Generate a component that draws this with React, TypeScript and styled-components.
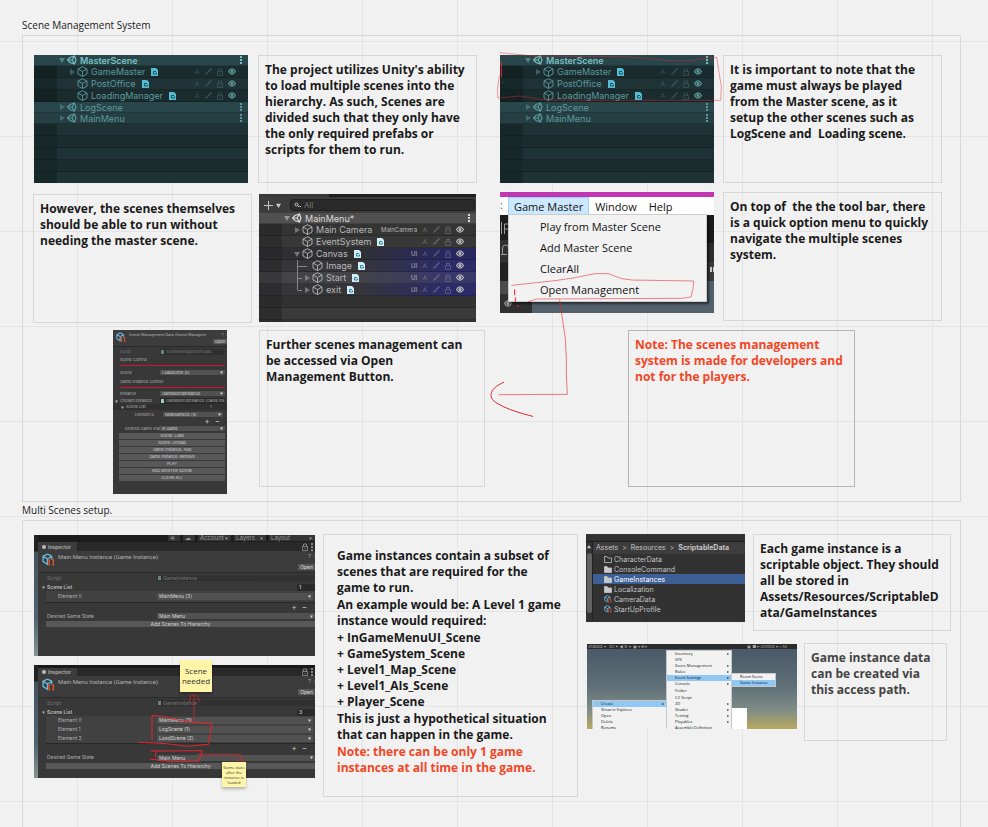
import React from "react";
import styled, { createGlobalStyle, css } from "styled-components";

const GlobalStyle = createGlobalStyle`
  * { box-sizing: border-box; }
  body { margin: 0; background: #f1f1f1; }
  button, input, select {
    margin: 0; padding: 0; border: 0; min-width: 0;
    font: inherit; color: inherit; background: none; text-align: left;
  }
  select, input { appearance: none; border-radius: 0; outline: 0; }
  h2, p, ul { margin: 0; padding: 0; list-style: none; font-weight: inherit; }
  svg { display: block; flex: none; }
`;

/* ---------- board ---------- */

const Board = styled.main`
  min-height: 100vh;
  display: flex;
  flex-direction: column;
  padding: 17px 27px 0 22px;
  overflow: hidden;
  font-family: "Open Sans", "Noto Sans", sans-serif;
  color: #1a1a1a;
  background-color: #f1f1f1;
  background-image:
    linear-gradient(90deg, #e4e4e4 1px, transparent 1px),
    linear-gradient(#e4e4e4 1px, transparent 1px);
  background-size: 95px 95px;
  background-position: 77px 41px;
`;

const FrameTitle = styled.h2`
  height: 18px;
  font-size: 10px;
  line-height: 16px;
`;

const Frame = styled.section<{ $open?: boolean }>`
  position: relative;
  border: 1px solid #d8d8d8;
  ${p => p.$open
    ? css`flex: 1; min-height: 290px; border-bottom: 0;`
    : css`height: 467px; flex: none;`}
`;

type Place = { $x: number; $y: number; $w: number; $h: number };

const placed = css<Place>`
  position: absolute;
  left: ${p => p.$x}px;
  top: ${p => p.$y}px;
  width: ${p => p.$w}px;
  height: ${p => p.$h}px;
`;

const Note = styled.article<Place & { $roomy?: boolean; $tone?: string; $edge?: string }>`
  ${placed}
  display: flex;
  flex-direction: column;
  gap: 1px;
  padding: ${p => (p.$roomy ? "13px" : "6px")};
  border: 1px solid ${p => p.$edge || "#d6d6d6"};
  font-size: 12px;
  font-weight: 700;
  line-height: 16px;
  white-space: pre;
  color: ${p => p.$tone || "#1a1a1a"};
`;

const Alert = styled.p`
  color: #f24726;
`;

const Shot = styled.div<Place & { $bg: string }>`
  ${placed}
  overflow: hidden;
  background: ${p => p.$bg};
  font-family: Inter, Roboto, sans-serif;
`;

const Ink = styled.svg<Place>`
  ${placed}
  pointer-events: none;
  fill: none;
  stroke: #e5252b;
  stroke-linecap: round;
  stroke-linejoin: round;
`;

const Sticky = styled.aside<Place & { $tiny?: boolean }>`
  ${placed}
  display: flex;
  align-items: center;
  justify-content: center;
  text-align: center;
  white-space: pre;
  background: #fff5a8;
  box-shadow: 0 2px 3px #0004;
  font-size: ${p => (p.$tiny ? 4 : 8)}px;
  line-height: ${p => (p.$tiny ? 5 : 10)}px;
  color: #333;
`;

/* ---------- glyphs ---------- */

const Triangle = ({ down = false, size = 6 }: { down?: boolean; size?: number }) => (
  <svg width={size} height={size} viewBox="0 0 6 6" fill="currentColor">
    <path d={down ? "M0 1h6L3 6z" : "M1 0v6l5-3z"} />
  </svg>
);

const UnityMark = () => (
  <svg width="10" height="10" viewBox="0 0 20 20" fill="none" stroke="currentColor" strokeWidth="2.400">
    <path d="M6 5 15 2l3 8-3 8-9-3-5-5z" />
    <path d="M1 10h9l5-8M10 10l5 8" />
  </svg>
);

const Cube = ({ size = 11 }: { size?: number }) => (
  <svg width={size} height={size} viewBox="0 0 22 22" fill="none" stroke="currentColor" strokeWidth="1.8">
    <path d="M11 1.500 20 6v10l-9 5-9-5V6zM2 6l9 5 9-5M11 11v10" />
  </svg>
);

const ScriptBadge = () => (
  <svg width="7" height="8" viewBox="0 0 14 16">
    <path d="M0 0h10l4 4v12H0z" fill="var(--badge)" />
    <path d="M10 7H5v5h6V9" fill="none" stroke="var(--badge-ink)" strokeWidth="2" />
  </svg>
);

const Pickable = () => (
  <svg width="6" height="7" viewBox="0 0 12 14" fill="none" stroke="currentColor" strokeWidth="1.500">
    <path d="M2 12 6 3l4 9M4 9h4" />
  </svg>
);
const Slash = () => (
  <svg width="7" height="7" viewBox="0 0 14 14" fill="none" stroke="currentColor" strokeWidth="3">
    <path d="M1 13 13 1" />
  </svg>
);
const Lock = () => (
  <svg width="6" height="8" viewBox="0 0 12 16" fill="none" stroke="currentColor" strokeWidth="1.800">
    <path d="M1 7h10v8H1zM3 7V2h6v5M6 10v2" />
  </svg>
);
const Eye = () => (
  <svg width="8" height="7" viewBox="0 0 16 14" fill="none" stroke="currentColor" strokeWidth="2.400">
    <path d="M1 7c4-7 10-7 14 0-4 7-10 7-14 0z" />
    <circle cx="8" cy="7" r="2" fill="currentColor" />
  </svg>
);
const Dots = () => (
  <svg width="2" height="8" viewBox="0 0 2 8" fill="currentColor">
    <path d="M0 0h2v2H0zM0 3h2v2H0zM0 6h2v2H0z" />
  </svg>
);
const Guide = ({ last = false, long = false }: { last?: boolean; long?: boolean }) => (
  <svg width="20" height="12" viewBox="0 0 20 12" fill="none" stroke="#888">
    <path d={`M4.500 0V${last ? 6 : 12}M4.500 6.500H${long ? 14 : 9}`} />
  </svg>
);
const AssetIcon = ({ size }: { size: number }) => (
  <svg width={size} height={size} viewBox="0 0 24 24" fill="none" strokeWidth="2.500">
    <path d="M10 2 18 6v6M10 2 2 6v10l8 5V11L2 6M10 11l8-5" stroke="#6bb7d9" />
    <path d="M15 13h-2v9h2M19 13h2v9h-2" stroke="#e5532d" />
  </svg>
);
const Folder = ({ open = false }: { open?: boolean }) => (
  <svg width="8" height="7" viewBox="0 0 16 14" fill={open ? "none" : "#c8c8c8"} stroke="#c8c8c8" strokeWidth="1.500">
    <path d="M1 1h5l2 3h7v9H1z" />
  </svg>
);

/* ---------- hierarchy ---------- */

const Tree = styled.ul<{ $teal?: boolean }>`
  --badge: ${p => (p.$teal ? "#56bcd3" : "#d4edf4")};
  --badge-ink: ${p => (p.$teal ? "#1b5260" : "#26809f")};
  color: ${p => (p.$teal ? "#5b999c" : "#b8b8b8")};
  font-size: 9px;
`;

const TreeRow = styled.li<{ $scene?: boolean; $bg: string; $gutter: string; $strong?: boolean; $ink?: string }>`
  display: flex;
  align-items: center;
  height: ${p => (p.$scene ? 11 : 12)}px;
  padding: 0 ${p => (p.$scene ? 6 : 12)}px 0 24px;
  background: linear-gradient(90deg, ${p => p.$gutter} 23px, transparent 23px), ${p => p.$bg};
  border-bottom: 1px solid #0003;
  white-space: nowrap;
  font-weight: ${p => (p.$strong ? 600 : 400)};
  color: ${p => p.$ink || "inherit"};
`;

const Slot = styled.span<{ $indent: number }>`
  display: flex;
  justify-content: center;
  width: 8px;
  flex: none;
  margin: 0 1px 0 ${p => p.$indent}px;
  opacity: 0.5;
`;
const GuideSlot = styled.span`
  width: 10px;
  flex: none;
`;
const Name = styled.span`
  margin: 0 6px 0 3px;
  line-height: 11px;
`;
const Tools = styled.span`
  display: flex;
  align-items: center;
  gap: 5px;
  margin-left: auto;
  font-size: 6px;
`;
const Dim = styled.span`
  display: flex;
  align-items: center;
  gap: 5px;
  opacity: 0.35;
`;

type Node = {
  name: string; scene?: boolean; arrow?: "r" | "d"; badge?: boolean; tag?: string;
  bg: string; gutter: string; depth?: number; strong?: boolean; ink?: string; guide?: "long" | "mid" | "last";
};

const Row = ({ n }: { n: Node }) => (
  <TreeRow $scene={n.scene} $bg={n.bg} $gutter={n.gutter} $strong={n.strong} $ink={n.ink}>
    {n.guide && (
      <>
        <GuideSlot />
        <GuideSlot><Guide last={n.guide === "last"} long={n.guide === "long"} /></GuideSlot>
      </>
    )}
    <Slot $indent={(n.depth || 0) * 10}>
      {n.arrow && <Triangle down={n.arrow === "d"} />}
    </Slot>
    {n.scene ? <UnityMark /> : <Cube />}
    <Name>{n.name}</Name>
    {n.badge && <ScriptBadge />}
    <Tools>
      {n.scene ? <Dots /> : (
        <>
          {n.tag && <span>{n.tag}</span>}
          <Dim><Pickable /><Slash /><Lock /></Dim>
          <Eye />
        </>
      )}
    </Tools>
  </TreeRow>
);

const G = "#17282b";
const tealNodes: Node[] = [
  { name: "MasterScene", scene: true, arrow: "d", strong: true, ink: "#79bfc2", bg: "#29474b", gutter: "#29474b" },
  { name: "GameMaster", depth: 1, arrow: "r", badge: true, bg: "#1b2c2f", gutter: "#142224" },
  { name: "PostOffice", depth: 1, badge: true, bg: "#1f3235", gutter: G },
  { name: "LoadingManager", depth: 1, badge: true, bg: "#1b2c2f", gutter: "#142224" },
  { name: "LogScene", scene: true, arrow: "r", bg: "#29474b", gutter: "#29474b" },
  { name: "MainMenu", scene: true, arrow: "r", bg: "#263f43", gutter: "#263f43" },
];

const TealHierarchy = () => (
  <Tree $teal>
    {tealNodes.map(n => <Row key={n.name} n={n} />)}
    {[0, 1, 2, 3, 4].map(i => (
      <TreeRow key={i} aria-hidden $bg={i % 2 ? "#1b2c2f" : "#1f3235"} $gutter={G} />
    ))}
  </Tree>
);

const blue = (base: string, end: string) => `linear-gradient(90deg, ${base} 45%, ${end} 85%)`;
const menuNodes: Node[] = [
  { name: "MainMenu*", scene: true, arrow: "d", ink: "#dcdcdc", bg: "#505050", gutter: "#505050" },
  { name: "Main Camera", depth: 1, arrow: "r", tag: "MainCamera", bg: "#343434", gutter: "#2b2b2b" },
  { name: "EventSystem", depth: 1, badge: true, bg: "#383838", gutter: "#2d2d2d" },
  { name: "Canvas", depth: 1, arrow: "d", badge: true, tag: "UI", bg: blue("#303034", "#282760"), gutter: "#29292c" },
  { name: "Image", guide: "long", badge: true, tag: "UI", bg: blue("#36363a", "#2c2b68"), gutter: "#2d2d30" },
  { name: "Start", guide: "mid", arrow: "r", badge: true, tag: "UI", bg: blue("#434348", "#393769"), gutter: "#39393d" },
  { name: "exit", guide: "last", arrow: "r", badge: true, tag: "UI", bg: blue("#36363a", "#2c2b68"), gutter: "#2d2d30" },
];

const TabStrip = styled.div`
  height: 3px;
  background: linear-gradient(90deg, #383838 70px, #1f1f1f 70px);
`;
const SearchBar = styled.div`
  display: flex;
  align-items: center;
  gap: 3px;
  height: 16px;
  padding: 0 1px 0 5px;
  color: #c8c8c8;
  background: #3c3c3c;
`;
const SearchField = styled.label`
  flex: 1;
  display: flex;
  align-items: center;
  gap: 3px;
  height: 12px;
  margin-left: 6px;
  padding-left: 3px;
  border: 1px solid #1f1f1f;
  border-radius: 3px;
  background: #2a2a2a;
  font-size: 8px;
  input { flex: 1; }
  input::placeholder { color: #777; }
`;

const MainMenuHierarchy = () => (
  <>
    <TabStrip />
    <SearchBar>
      <button aria-label="Create">
        <svg width="9" height="9" viewBox="0 0 9 9" stroke="currentColor"><path d="M4.500 0v9M0 4.500h9" /></svg>
      </button>
      <Triangle down size={5} />
      <SearchField>
        <svg width="7" height="7" viewBox="0 0 14 14" fill="none" stroke="currentColor" strokeWidth="2">
          <circle cx="5" cy="5" r="3" /><path d="m7 7 3 3M11 9h3" />
        </svg>
        <input aria-label="Search hierarchy" placeholder="All" />
      </SearchField>
    </SearchBar>
    <Tree>
      {menuNodes.map(n => <Row key={n.name} n={n} />)}
      <TreeRow aria-hidden $bg="#323232" $gutter="#2b2b2b" />
      <TreeRow aria-hidden $bg="#3a3a3a" $gutter="#2d2d2d" />
      <TreeRow aria-hidden $bg="#323232" $gutter="#2b2b2b" />
    </Tree>
  </>
);

/* ---------- menu bar ---------- */

const Ribbon = styled.div`
  height: 5px;
  background: #c235b3;
`;
const MenuBar = styled.nav`
  display: flex;
  height: 18px;
  background: #fff;
  font-family: "Open Sans", sans-serif;
  font-size: 11px;
  color: #111;
`;
const MenuEdge = styled.span`
  width: 8px;
  color: #26648f;
`;
const MenuTitle = styled.button<{ $active?: boolean }>`
  padding: 0 5px;
  border: 1px solid ${p => (p.$active ? "#99d1ff" : "transparent")};
  background: ${p => (p.$active ? "#cce8ff" : "none")};
`;
const EditorBehind = styled.div`
  display: grid;
  grid-template-columns: 32px 1fr 7px;
  height: 98px;
  color: #9b9b9b;
  font-size: 12px;
`;
const EditorLeft = styled.div`
  display: flex;
  flex-direction: column;
  justify-content: space-between;
  padding: 6px 0 6px 1px;
  background: linear-gradient(#1d1d1d 25px, #303030 25px 48px, #222 48px 66px, #4a4a4a 66px 79px, #303030 79px);
`;
const EyeSlot = styled.span`
  padding-left: 3px;
`;
const EditorView = styled.div`
  background: #53616d;
`;
const EditorRight = styled.div`
  background: linear-gradient(#1b1b1b 28px, #2d2d2d 28px 47px, #3c3c3c 47px 66px, #53616d 66px);
  padding: 52px 0 0 3px;
  color: #ccc;
`;
const DropMenu = styled.div`
  position: absolute;
  left: 8px;
  top: 22px;
  width: 199px;
  display: flex;
  flex-direction: column;
  gap: 1px;
  padding: 1px 0 2px;
  background: #f2f2f2;
  border: 1px solid #ccc;
  box-shadow: 2px 2px 2px #0008;
  font-family: "Open Sans", sans-serif;
  font-size: 11px;
  color: #111;
  button { height: 20px; padding-left: 31px; }
`;

const MenuShot = () => (
  <>
    <Ribbon />
    <MenuBar>
      <MenuEdge>:</MenuEdge>
      <MenuTitle $active>Game Master</MenuTitle>
      <MenuTitle>Window</MenuTitle>
      <MenuTitle>Help</MenuTitle>
    </MenuBar>
    <EditorBehind>
      <EditorLeft>
        <svg width="8" height="36" viewBox="0 0 8 36" fill="none" stroke="currentColor">
          <path d="M.5 1v12M3.500 13V3h4M3.500 8h4M0 33.500h6M1.500 33v-6q0-3 3-3t3 3v6" />
        </svg>
        <EyeSlot><Eye /></EyeSlot>
      </EditorLeft>
      <EditorView />
      <EditorRight><svg width="4" height="5" fill="currentColor"><path d="M0 0h2v5H0zM3 0h1v5H3z" /></svg></EditorRight>
    </EditorBehind>
    <DropMenu>
      <button>Play from Master Scene</button>
      <button>Add Master Scene</button>
      <button>ClearAll</button>
      <button>Open Management</button>
    </DropMenu>
  </>
);

/* ---------- inspectors ---------- */

const Panel = styled.div<{ $size: number }>`
  font-size: ${p => p.$size}px;
  color: #b0b0b0;
  white-space: nowrap;
`;
const Line = styled.div<{ $h: number; $left: number; $cols?: number; $right?: number; $dim?: boolean; $bg?: string; $bold?: boolean }>`
  display: grid;
  grid-template-columns: ${p => (p.$cols ? `${p.$cols - p.$left}px minmax(0, 1fr)` : "1fr")};
  align-items: center;
  height: ${p => p.$h}px;
  line-height: ${p => p.$h}px;
  padding: 0 ${p => p.$right || 0}px 0 ${p => p.$left}px;
  opacity: ${p => (p.$dim ? 0.5 : 1)};
  background: ${p => p.$bg || "none"};
  font-weight: ${p => (p.$bold ? 700 : 400)};
`;
const Pick = styled.span<{ $h: number }>`
  display: flex;
  align-items: center;
  height: ${p => p.$h}px;
  line-height: ${p => p.$h}px;
  padding: 0 2px;
  border-radius: 1px;
  background: #515151;
  color: #d8d8d8;
  select { flex: 1; height: ${p => p.$h}px; }
`;
const Choice = ({ h, label, value }: { h: number; label: string; value: string }) => (
  <Pick $h={h}>
    <select aria-label={label}><option>{value}</option></select>
    <Triangle down size={3} />
  </Pick>
);
const ObjectField = styled.span`
  display: flex;
  align-items: center;
  gap: 2px;
  padding-left: 1px;
  height: 6px;
  background: #2a2a2a;
  i { width: 3px; height: 4px; background: #9ccfb8; }
`;
const RedRule = styled.div`
  height: 1px;
  margin: 1px 2px 1px 7px;
  background: #d1103c;
`;
const PlusMinus = styled.div<{ $h: number; $right: number }>`
  display: flex;
  justify-content: flex-end;
  gap: 5px;
  height: ${p => p.$h}px;
  padding-right: ${p => p.$right}px;
  font-size: 8px;
  line-height: ${p => p.$h}px;
  color: #ccc;
`;
const ActionButton = styled.button<{ $left: number; $right?: number }>`
  display: block;
  width: calc(100% - ${p => p.$left + (p.$right || 0)}px);
  height: 6px;
  margin: 0 0 1px ${p => p.$left}px;
  line-height: 6px;
  text-align: center;
  background: #585858;
  color: #d4d4d4;
`;
const Header = styled.div<{ $h: number; $left: number }>`
  display: flex;
  align-items: flex-start;
  gap: 3px;
  height: ${p => p.$h}px;
  padding: 2px 0 0 ${p => p.$left}px;
  background: #3c3c3c;
  border-bottom: 1px solid #2a2a2a;
`;
const HeaderText = styled.span<{ $size: number }>`
  flex: 1;
  font-family: Roboto, sans-serif;
  font-size: ${p => p.$size}px;
`;
const HeaderSide = styled.span`
  display: flex;
  flex-direction: column;
  align-items: flex-end;
  justify-content: space-between;
  height: 100%;
  padding-bottom: 2px;
`;
const OpenButton = styled.button`
  padding: 0 2px;
  background: #585858;
  color: #ddd;
`;
const Arrowed = styled.span`
  display: flex;
  align-items: center;
  gap: 2px;
  margin-left: -5px;
`;

const ManagerInspector = () => (
  <Panel $size={4}>
    <Header $h={17} $left={3}>
      <AssetIcon size={10} />
      <HeaderText $size={4}>Scene Management Data (Scene Managem</HeaderText>
      <HeaderSide><span>?&nbsp;&nbsp;:</span><OpenButton>Open</OpenButton></HeaderSide>
    </Header>
    <Line $h={9} $left={7} $cols={47} $right={2} $dim>Script<ObjectField><i />SceneManagementData</ObjectField></Line>
    <Line $h={8} $left={7}>Scene Control</Line>
    <RedRule />
    <Line $h={11} $left={7} $cols={47} $right={2}>Scene<Choice h={5} label="Scene" value="LoadScene (2)" /></Line>
    <Line $h={8} $left={7}>Game Instance Control</Line>
    <RedRule />
    <Line $h={9} $left={7} $cols={47} $right={2}>Instance<Choice h={5} label="Instance" value="GameWorldInstance" /></Line>
    <Line $h={6} $left={7} $cols={47} $right={2}>
      <Arrowed><Triangle down size={3} />Chosen Instance</Arrowed>
      <ObjectField><i />GameWorldInstance (Game Ins</ObjectField>
    </Line>
    <Line $h={6} $left={13} $cols={97} $right={2} $bg="#303030"><Arrowed><Triangle down size={3} />Scene List</Arrowed>1</Line>
    <Line $h={9} $left={22} $cols={50} $right={4}>Element 0<Choice h={5} label="Element 0" value="NewGame2D (4)" /></Line>
    <PlusMinus $h={5} $right={7}><button aria-label="Add scene">+</button><button aria-label="Remove scene">−</button></PlusMinus>
    <Line $h={9} $left={12} $cols={47} $right={2}>Desired Game Stat<Choice h={5} label="Desired Game State" value="In Game" /></Line>
    {["Scene: Load", "Scene: Unload", "Game Instance: Add", "Game Instance: Remove", "PLAY", "ADD MASTER SCENE", "CLEAR ALL"].map(t => (
      <ActionButton key={t} $left={6} $right={2}>{t}</ActionButton>
    ))}
  </Panel>
);

const Columns = styled.div`
  display: grid;
  grid-template-columns: 4px minmax(0, 1fr);
  height: 100%;
`;
const Sliver = styled.div`
  background: linear-gradient(#222 16px, #43525f 17px, #52646f 70%, #84958f);
`;
const Toolbar = styled.div`
  display: flex;
  justify-content: flex-end;
  gap: 3px;
  height: 7px;
  background: #1c1c1c;
  color: #999;
  font-size: 6px;
  line-height: 6px;
`;
const ToolChip = styled.button<{ $w: number }>`
  display: flex;
  align-items: center;
  justify-content: space-between;
  width: ${p => p.$w}px;
  height: 6px;
  padding: 0 3px 0 2px;
  background: #353535;
`;
const Tabs = styled.div<{ $h: number }>`
  display: flex;
  align-items: center;
  justify-content: space-between;
  height: ${p => p.$h}px;
  padding-right: 2px;
  background: #292929;
`;
const Tab = styled.span`
  display: flex;
  align-items: center;
  gap: 2px;
  height: 100%;
  padding: 0 6px 0 4px;
  background: #3c3c3c;
  font-weight: 600;
  i { width: 4px; height: 4px; border-radius: 50%; background: #bbb; }
`;
const TabTools = styled.span`
  display: flex;
  gap: 3px;
  opacity: 0.7;
`;
const CountInput = styled.input`
  justify-self: end;
  width: 18px;
  height: 7px;
  padding-left: 2px;
  background: #2a2a2a;
`;
const ElementList = styled.div`
  margin-left: 8px;
  background: #414141;
  border-bottom: 1px solid #282828;
`;

type InspectorProps = { top: React.ReactNode; tab: number; head: number; script: number; rows: string[]; rowH: number; tail: number };

const InstanceInspector = ({ top, tab, head, script, rows, rowH, tail }: InspectorProps) => (
  <Columns>
    <Sliver />
    <Panel $size={5}>
      {top}
      <Tabs $h={tab}>
        <Tab><i />Inspector</Tab>
        <TabTools><Lock /><Dots /></TabTools>
      </Tabs>
      <Header $h={head} $left={4}>
        <AssetIcon size={13} />
        <HeaderText $size={6}>Main Menu Instance (Game Instance)</HeaderText>
        <HeaderSide><span>?&nbsp;&nbsp;:</span><OpenButton>Open</OpenButton></HeaderSide>
      </Header>
      <Line $h={script} $left={9} $cols={119} $dim>Script<ObjectField><i />GameInstance</ObjectField></Line>
      <Line $h={8} $left={9} $cols={119} $bold>
        <Arrowed><Triangle down size={3} />Scene List</Arrowed>
        <CountInput aria-label="Scene count" defaultValue={rows.length} />
      </Line>
      <ElementList>
        {rows.map((r, i) => (
          <Line key={r} $h={rowH} $left={12} $cols={111} $right={2}>
            {`Element ${i}`}<Choice h={7} label={`Element ${i}`} value={r} />
          </Line>
        ))}
      </ElementList>
      <PlusMinus $h={8} $right={8}><button aria-label="Add scene">+</button><button aria-label="Remove scene">−</button></PlusMinus>
      <Line $h={tail} $left={9} $cols={119}>Desired Game State<Choice h={6} label="Desired Game State" value="Main Menu" /></Line>
      <ActionButton $left={8}>Add Scenes To Hierarchy</ActionButton>
    </Panel>
  </Columns>
);

const TopStrip = styled.div`
  height: 3px;
  background: #1a1a1a;
`;

/* ---------- asset browser ---------- */

const Browser = styled.div`
  display: grid;
  grid-template-columns: 7px minmax(0, 1fr);
  height: 80px;
  margin-top: 7px;
  border-top: 1px solid #1c1c1c;
  font-size: 7px;
  color: #c4c4c4;
`;
const ScrollRail = styled.div`
  display: flex;
  flex-direction: column;
  align-items: center;
  gap: 4px;
  padding-top: 3px;
  border-right: 1px solid #222;
  color: #ccc;
`;
const Thumb = styled.div`
  width: 5px;
  height: 60px;
  border-radius: 3px;
  background: #636363;
`;
const Crumbs = styled.nav`
  display: flex;
  gap: 4px;
  height: 12px;
  padding-left: 3px;
  line-height: 12px;
  background: #3d3d3d;
  white-space: nowrap;
`;
const Crumb = styled.a`
  color: inherit;
  text-decoration: none;
`;
const FileRow = styled.li<{ $on?: boolean }>`
  display: flex;
  align-items: center;
  gap: 2px;
  height: 10px;
  padding-left: 11px;
  background: ${p => (p.$on ? "#3e5f96" : "none")};
  color: ${p => (p.$on ? "#fff" : "inherit")};
`;

const AssetBrowser = () => (
  <Browser>
    <ScrollRail>
      <svg width="4" height="4" viewBox="0 0 6 6" fill="currentColor"><path d="M0 5h6L3 0z" /></svg>
      <Thumb />
    </ScrollRail>
    <div>
      <Crumbs>
        <Crumb href="#assets">Assets</Crumb><span>&gt;</span>
        <Crumb href="#resources">Resources</Crumb><span>&gt;</span>
        <b>ScriptableData</b>
      </Crumbs>
      <ul>
        <FileRow><Folder open />CharacterData</FileRow>
        <FileRow><Folder />ConsoleCommand</FileRow>
        <FileRow $on><Folder />GameInstances</FileRow>
        <FileRow><Folder />Localization</FileRow>
        <FileRow><AssetIcon size={8} />CameraData</FileRow>
        <FileRow><AssetIcon size={8} />StartUpProfile</FileRow>
      </ul>
    </div>
  </Browser>
);

/* ---------- create-asset menus ---------- */

const SceneBar = styled.div`
  display: flex;
  justify-content: space-between;
  height: 5px;
  padding: 0 10px 0 1px;
  background: #2b2b2b;
  color: #aaa;
  font-size: 4px;
  line-height: 5px;
`;
const Popup = styled.div<Place>`
  ${placed}
  display: flex;
  flex-direction: column;
  overflow: hidden;
  border: 1px solid #c8c8c8;
  background: #f2f2f2;
  color: #111;
  font-family: "Open Sans", sans-serif;
  font-size: 4px;
`;
const PopupItem = styled.button<{ $on?: boolean; $gap?: boolean }>`
  display: flex;
  flex: none;
  align-items: center;
  justify-content: space-between;
  height: 6px;
  line-height: 6px;
  margin-top: ${p => (p.$gap ? 1 : 0)}px;
  padding: 0 2px 0 8px;
  background: ${p => (p.$on ? "#8fc7f5" : "none")};
`;
const Sheet = styled.div<Place>`
  ${placed}
  background: #fff;
`;

const CreateMenus = () => (
  <>
    <SceneBar><span>Shaded ▾ &nbsp; 2D ✦ ◀ ⚙ ▾ ▣ ▾ ⊞ ▾</span><span>▣ ■ ▾ Gizmos ▾ ◦ All</span></SceneBar>
    <Sheet $x={145} $y={64} $w={15} $h={21} />
    <Popup $x={5} $y={56} $w={75} $h={40}>
      <PopupItem $on>Create<Triangle size={2} /></PopupItem>
      {["Show in Explorer", "Open", "Delete", "Rename"].map(t => <PopupItem key={t}>{t}</PopupItem>)}
    </Popup>
    <Popup $x={79} $y={6} $w={66} $h={90}>
      {["Inventory", "VFX", "Scene Management", "Rules", "Event Settings", "Console", "Folder", "C# Script", "2D", "Shader", "Testing", "Playables", "Assembly Definition"].map((t, i) => (
        <PopupItem key={t} $on={i === 4} $gap={i === 6 || i === 7}>{t}{i !== 1 && i !== 6 && i !== 7 && i !== 12 && <Triangle size={2} />}</PopupItem>
      ))}
    </Popup>
    <Popup $x={144} $y={29} $w={45} $h={14}>
      <PopupItem>Room Scene</PopupItem>
      <PopupItem $on>Game Instance</PopupItem>
    </Popup>
  </>
);

/* ---------- page ---------- */

export default function App() {
  return (
    <Board>
      <GlobalStyle />
      <FrameTitle>Scene Management System</FrameTitle>
      <Frame>
        <Shot $x={11} $y={19} $w={214} $h={128} $bg="#1f3235"><TealHierarchy /></Shot>
        <Note $x={235} $y={19} $w={219} $h={128}>
          <p>{"The project utilizes Unity's ability\nto load multiple scenes into the\nhierarchy. As such, Scenes are\ndivided such that they only have\nthe only required prefabs or\nscripts for them to run."}</p>
        </Note>
        <Shot $x={477} $y={19} $w={214} $h={128} $bg="#1f3235"><TealHierarchy /></Shot>
        <Note $x={700} $y={19} $w={219} $h={128}>
          <p>{"It is important to note that the\ngame must always be played\nfrom the Master scene, as it\nsetup the other scenes such as\nLogScene and  Loading scene."}</p>
        </Note>
        <Note $x={10} $y={158} $w={219} $h={129}>
          <p>{"However, the scenes themselves\nshould be able to run without\nneeding the master scene."}</p>
        </Note>
        <Shot $x={236} $y={158} $w={217} $h={128} $bg="#323232"><MainMenuHierarchy /></Shot>
        <Shot $x={477} $y={156} $w={214} $h={121} $bg="#303030"><MenuShot /></Shot>
        <Note $x={700} $y={156} $w={219} $h={129}>
          <p>{"On top of  the the tool bar, there\nis a quick option menu to quickly\nnavigate the multiple scenes\nsystem."}</p>
        </Note>
        <Shot $x={90} $y={294} $w={114} $h={164} $bg="#383838"><ManagerInspector /></Shot>
        <Note $x={236} $y={294} $w={226} $h={157}>
          <p>{"Further scenes management can\nbe accessed via Open\nManagement Button."}</p>
        </Note>
        <Note $x={605} $y={294} $w={227} $h={157} $edge="#b5b5b5">
          <Alert>{"Note: The scenes management\nsystem is made for developers and\nnot for the players."}</Alert>
        </Note>

        <Ink $x={467} $y={4} $w={240} $h={150} viewBox="0 0 720 450" strokeWidth="3">
          <path opacity="0.45" d="M30 38 130 48 400 50 480 56 540 62H600L650 54 680 52 694 140 692 181H330L190 180 150 178 90 168 24 174 22 150 28 108" />
          <path d="M34 66V112M37 127v1" />
        </Ink>
        <Ink $x={462} $y={149} $w={240} $h={240} viewBox="0 0 720 720" strokeWidth="3">
          <path opacity="0.55" d="M80 301 210 287 270 278 330 266 370 266 410 281 440 285 626 288 624 312 618 336 590 340 154 342 130 350" />
          <path opacity="0.6" d="M224 345 232 400 241 460 244 520V570L247 628 42 629" />
          <path d="M56 592C8 612 8 642 42 658 70 674 105 684 143 694M89 314v16M91 338v12M97 363h4" />
        </Ink>
      </Frame>

      <FrameTitle>Multi Scenes setup.</FrameTitle>
      <Frame $open>
        <Shot $x={11} $y={14} $w={281} $h={121} $bg="#383838">
          <InstanceInspector
            top={
              <Toolbar>
                <ToolChip $w={12} aria-label="Cloud services">✲</ToolChip>
                <ToolChip $w={12} aria-label="Cloud">☁</ToolChip>
                <ToolChip $w={33}>Account<Triangle down size={3} /></ToolChip>
                <ToolChip $w={32}>Layers<Triangle down size={3} /></ToolChip>
                <ToolChip $w={46}>Layout<Triangle down size={3} /></ToolChip>
              </Toolbar>
            }
            tab={9} head={22} script={10} rows={["MainMenu (3)"]} rowH={11} tail={10}
          />
        </Shot>
        <Shot $x={11} $y={144} $w={281} $h={113} $bg="#383838">
          <InstanceInspector
            top={<TopStrip />}
            tab={8} head={22} script={10} rows={["MainMenu (3)", "LogScene (1)", "LoadScene (2)"]} rowH={9} tail={11}
          />
        </Shot>
        <Note $x={300} $y={13} $w={255} $h={263} $roomy>
          <p>{"Game instances contain a subset of\nscenes that are required for the\ngame to run."}</p>
          <p>{"An example would be: A Level 1 game\ninstance would required:"}</p>
          <p>{"+ InGameMenuUI_Scene\n+ GameSystem_Scene\n+ Level1_Map_Scene\n+ Level1_AIs_Scene\n+ Player_Scene"}</p>
          <p>{"This is just a hypothetical situation\nthat can happen in the game."}</p>
          <Alert>{"Note: there can be only 1 game\ninstances at all time in the game."}</Alert>
        </Note>
        <Shot $x={563} $y={13} $w={159} $h={88} $bg="#323232"><AssetBrowser /></Shot>
        <Note $x={730} $y={13} $w={198} $h={97}>
          <p>{"Each game instance is a\nscriptable object. They should\nall be stored in\nAssets/Resources/ScriptableD\nata/GameInstances"}</p>
        </Note>
        <Shot $x={564} $y={123} $w={210} $h={85} $bg="linear-gradient(#4b5b69 10%, #5f7078 50%, #7f8d86 78%, #b9a860)"><CreateMenus /></Shot>
        <Note $x={781} $y={122} $w={143} $h={98} $tone="#444">
          <p>{"Game instance data\ncan be created via\nthis access path."}</p>
        </Note>

        <Ink $x={-3} $y={134} $w={310} $h={140} viewBox="0 0 930 420" strokeWidth="3">
          <path d="M396 254V182L430 184 470 194 500 200 576 206 566 268 500 274 440 266 358 262M394 288 548 287 536 318 460 320 390 312M408 288 406 306" />
          <path opacity="0.7" d="M522 202V120M508 142 512 122 520 118 530 122 540 140M530 298H660L664 318M648 306 654 322 664 324 674 310" />
        </Ink>
        <Sticky $x={157} $y={139} $w={32} $h={32}>{"Scene\nneeded"}</Sticky>
        <Sticky $x={199} $y={241} $w={24} $h={25} $tiny>{"Game state\nafter the\ninstance is\nloaded"}</Sticky>
      </Frame>
    </Board>
  );
}
